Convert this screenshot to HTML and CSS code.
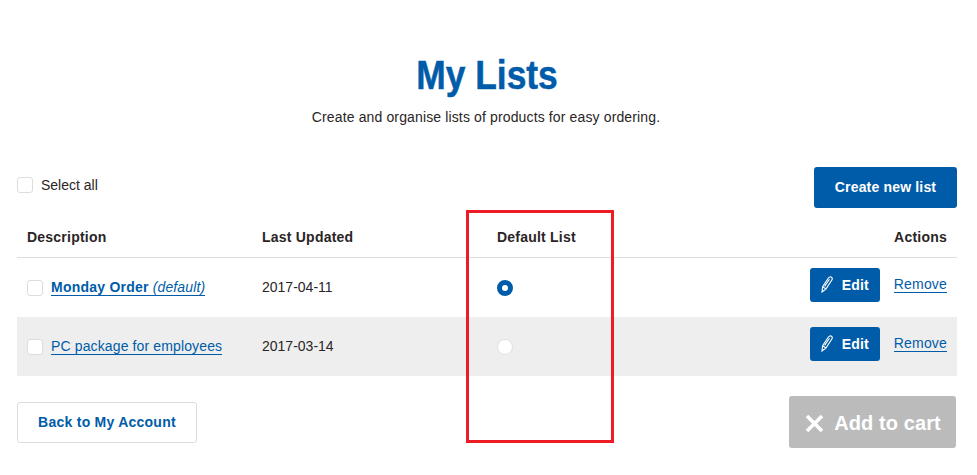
FILE: index.html
```html
<!DOCTYPE html>
<html lang="en">
<head>
<meta charset="utf-8">
<title>My Lists</title>
<link rel="stylesheet" href="styles.css">
</head>
<body>
<main class="page">
  <header class="intro">
    <h1 class="title">My Lists</h1>
    <p class="lead">Create and organise lists of products for easy ordering.</p>
  </header>
  <div class="toolbar">
    <label class="select-all"><span class="check"></span>Select all</label>
    <a class="btn btn-create" href="#">Create new list</a>
  </div>
  <div class="table">
    <div class="row head">
      <div class="cell-desc">Description</div>
      <div>Last Updated</div>
      <div>Default List</div>
      <div class="cell-actions">Actions</div>
    </div>
    <div class="row">
      <div class="cell-desc"><span class="check"></span><a class="list-link" href="#"><b>Monday Order</b> <i>(default)</i></a></div>
      <div class="date">2017-04-11</div>
      <div class="cell-radio"><span class="radio radio-on"></span></div>
      <div class="cell-actions">
        <a class="btn btn-edit" href="#"><svg class="pencil" viewBox="0 0 12 17" width="12" height="17"><path d="M1 16 1.6 10.6 7.4 2C8.2.9 9.6.6 10.5 1.3 11.4 2 11.4 3.2 10.7 4.3L4.9 13ZM1.6 10.6 4.9 13M3.6 10.4 8.5 3.2" fill="none" stroke="#fff" stroke-width="1.1"/></svg>Edit</a>
        <a class="remove" href="#">Remove</a>
      </div>
    </div>
    <div class="row alt">
      <div class="cell-desc"><span class="check"></span><a class="list-link" href="#">PC package for employees</a></div>
      <div class="date">2017-03-14</div>
      <div class="cell-radio"><span class="radio"></span></div>
      <div class="cell-actions">
        <a class="btn btn-edit" href="#"><svg class="pencil" viewBox="0 0 12 17" width="12" height="17"><path d="M1 16 1.6 10.6 7.4 2C8.2.9 9.6.6 10.5 1.3 11.4 2 11.4 3.2 10.7 4.3L4.9 13ZM1.6 10.6 4.9 13M3.6 10.4 8.5 3.2" fill="none" stroke="#fff" stroke-width="1.1"/></svg>Edit</a>
        <a class="remove" href="#">Remove</a>
      </div>
    </div>
  </div>
  <div class="footer">
    <a class="btn-back" href="#">Back to My Account</a>
    <a class="btn-cart" href="#"><svg class="cross" viewBox="0 0 19 19" width="19" height="19"><path d="M2 2 17 17M17 2 2 17" fill="none" stroke="#fff" stroke-width="3.6"/></svg>Add to cart</a>
  </div>
  <div class="highlight"></div>
</main>
</body>
</html>
```
FILE: styles.css
```css
* { box-sizing: border-box; }
html, body { margin: 0; padding: 0; background: #fff; }
body { font-family: "Liberation Sans", Arial, sans-serif; font-size: 14px; color: #2a2526; overflow: hidden; }
a { text-decoration: none; }
.page { position: relative; width: 977px; height: 475px; padding: 0 20px 0 17px; }
.intro { text-align: center; padding-top: 50px; }
.title { margin: 0; height: 50px; font-size: 40px; line-height: 50px; font-weight: 700; color: #005ca9; transform: scaleX(0.885); -webkit-text-stroke: 0.5px #005ca9; }
.lead { margin: 8px 0 0; padding-right: 2px; font-size: 14px; line-height: 18px; letter-spacing: 0.135px; }
.toolbar { display: flex; justify-content: space-between; align-items: flex-start; margin-top: 41px; height: 50px; }
.select-all { display: flex; align-items: center; gap: 8px; margin-top: 9px; line-height: 18px; }
.check { display: block; width: 16px; height: 16px; background: #fff; border: 1px solid #ddd; border-radius: 3px; flex: none; }
.btn { display: inline-flex; align-items: center; justify-content: center; background: #005ca9; color: #fff; font-weight: 700; border-radius: 3px; letter-spacing: 0.17px; }
.btn-create { width: 143px; height: 41px; padding-bottom: 2px; }
.row { display: grid; grid-template-columns: 245px 235px 1fr 300px; align-items: center; height: 59px; }
.row.alt { background: #eee; }
.row.head { height: 41px; font-weight: 700; letter-spacing: 0.22px; border-bottom: 1px solid #ddd; }
.cell-desc { display: flex; align-items: center; gap: 8px; padding-left: 10px; }
.date { padding-bottom: 2px; }
.list-link { color: #005ca9; border-bottom: 1px solid #005ca9; line-height: 15px; letter-spacing: 0.13px; }
.list-link b { letter-spacing: 0.23px; }
.cell-radio { display: flex; }
.radio { display: block; width: 16px; height: 16px; border-radius: 50%; background: #fff; border: 1px solid #e2e2e2; }
.radio-on { border: 5px solid #005ca9; }
.cell-actions { display: flex; justify-content: flex-end; align-items: center; padding-right: 10px; }
.btn-edit { width: 70px; height: 34px; gap: 9px; margin-right: 14px; margin-top: -5px; padding-bottom: 1px; }
.remove { color: #005ca9; border-bottom: 1px solid #005ca9; line-height: 15px; margin-top: -5px; letter-spacing: 0.17px; }
.footer { display: flex; justify-content: space-between; align-items: flex-start; margin-top: 26px; }
.btn-back { display: flex; align-items: center; justify-content: center; width: 180px; height: 41px; padding-bottom: 2px; border: 1px solid #ddd; border-radius: 3px; color: #005ca9; font-weight: 700; letter-spacing: 0.25px; }
.btn-cart { display: flex; align-items: center; justify-content: center; gap: 10px; width: 167px; height: 52px; padding: 2px 0 0 1px; margin-top: -6px; margin-right: 1px; background: #bbb; color: #fff; border-radius: 3px; font-size: 20px; font-weight: 700; letter-spacing: 0.1px; }
.highlight { position: absolute; left: 466px; top: 210px; width: 148px; height: 233px; border: 3px solid #ed1c24; pointer-events: none; }
```
